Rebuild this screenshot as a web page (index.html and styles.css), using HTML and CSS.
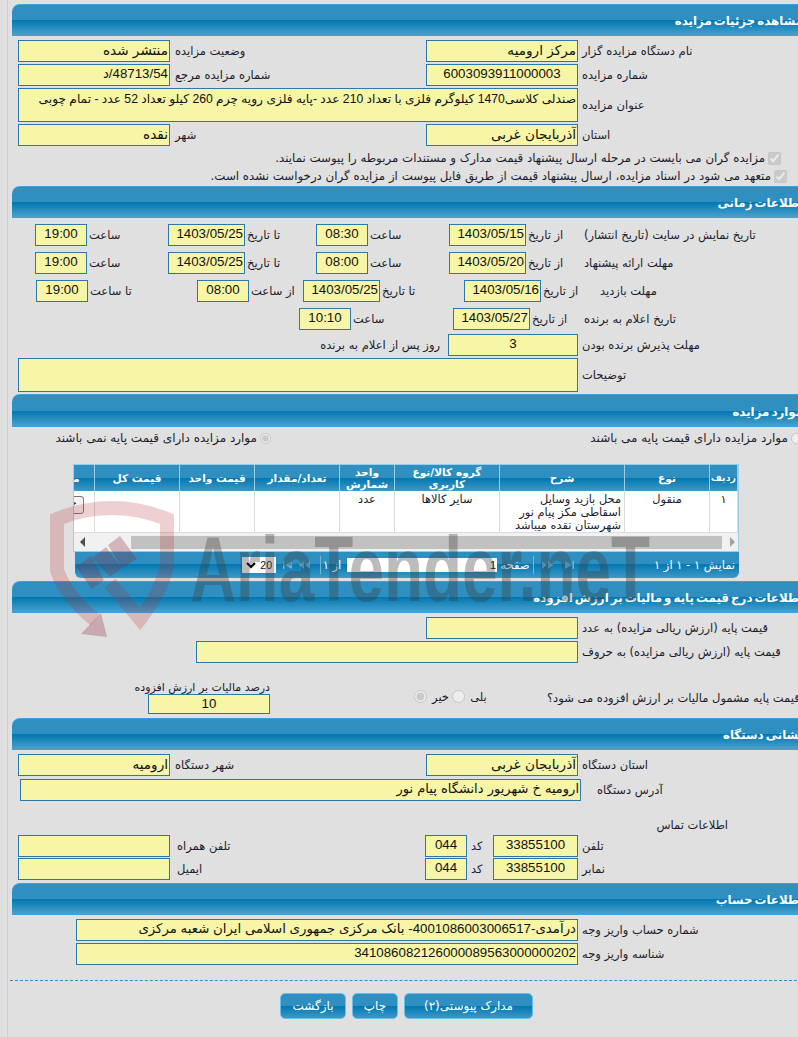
FILE: index.html
```html
<!DOCTYPE html>
<html lang="fa">
<head>
<meta charset="utf-8">
<title>مشاهده جزئیات مزایده</title>
<link rel="stylesheet" href="styles.css">
</head>
<body>
<div class="page">

<section>
  <h2 class="bar"><span dir="rtl">مشاهده جزئیات مزایده</span></h2>
  <div class="row two mt4">
    <div class="field fa">منتشر شده</div><div class="lb">وضعیت مزایده</div>
    <div class="field fa">مرکز ارومیه</div><div class="lb">نام دستگاه مزایده گزار</div>
  </div>
  <div class="row two mt4">
    <div class="field">48713/54/د</div><div class="lb">شماره مزایده مرجع</div>
    <div class="field center">6003093911000003</div><div class="lb">شماره مزایده</div>
  </div>
  <div class="row title mt4">
    <div class="field area">صندلی کلاسی1470 کیلوگرم فلزی با تعداد 210 عدد -پایه فلزی رویه چرم 260 کیلو تعداد 52 عدد - تمام چوبی</div><div class="lb">عنوان مزایده</div>
  </div>
  <div class="row two mt6">
    <div class="field fa">نقده</div><div class="lb">شهر</div>
    <div class="field fa">آذربایجان غربی</div><div class="lb">استان</div>
  </div>
  <div class="check one"><input type="checkbox" checked disabled><span>مزایده گران می بایست در مرحله ارسال پیشنهاد قیمت مدارک و مستندات مربوطه را پیوست نمایند.</span></div>
  <div class="check two-c"><input type="checkbox" checked disabled><span>متعهد می شود در اسناد مزایده، ارسال پیشنهاد قیمت از طریق فایل پیوست از مزایده گران درخواست نشده است.</span></div>
</section>

<section>
  <h2 class="bar"><span dir="rtl">اطلاعات زمانی</span></h2>
  <div class="row t1 mt6">
    <div class="field center">19:00</div><div class="lb">ساعت</div>
    <div class="field">1403/05/25</div><div class="lb">تا تاریخ</div>
    <div class="field center">08:30</div><div class="lb">ساعت</div>
    <div class="field">1403/05/15</div><div class="lb">از تاریخ</div>
    <div class="lb">تاریخ نمایش در سایت (تاریخ انتشار)</div>
  </div>
  <div class="row t1 mt8">
    <div class="field center">19:00</div><div class="lb">ساعت</div>
    <div class="field">1403/05/25</div><div class="lb">تا تاریخ</div>
    <div class="field center">08:00</div><div class="lb">ساعت</div>
    <div class="field">1403/05/20</div><div class="lb">از تاریخ</div>
    <div class="lb">مهلت ارائه پیشنهاد</div>
  </div>
  <div class="row t3 mt8">
    <div class="field center">19:00</div><div class="lb">تا ساعت</div>
    <div class="field center">08:00</div><div class="lb">از ساعت</div>
    <div class="field">1403/05/25</div><div class="lb">تا تاریخ</div>
    <div class="field">1403/05/16</div><div class="lb">از تاریخ</div>
    <div class="lb">مهلت بازدید</div>
  </div>
  <div class="row t4 mt8">
    <div class="field center">10:10</div><div class="lb">ساعت</div>
    <div class="field">1403/05/27</div><div class="lb">از تاریخ</div>
    <div class="lb">تاریخ اعلام به برنده</div>
  </div>
  <div class="row t5 mt6">
    <div class="lb end">روز پس از اعلام به برنده</div>
    <div class="field center">3</div>
    <div class="lb">مهلت پذیرش برنده بودن</div>
  </div>
  <div class="row title mt4">
    <div class="field area"></div><div class="lb">توضیحات</div>
  </div>
</section>

<section>
  <h2 class="bar tall"><span dir="rtl">موارد مزایده</span></h2>
  <div class="radios">
    <div class="radio-item"><input type="radio" name="base" checked disabled><span>موارد مزایده دارای قیمت پایه نمی باشند</span></div>
    <div class="radio-item"><input type="radio" name="base" disabled><span>موارد مزایده دارای قیمت پایه می باشند</span></div>
  </div>
  <div class="grid-box">
    <div class="grid-clip">
      <table>
        <colgroup>
          <col class="c1"><col class="c2"><col class="c3"><col class="c4"><col class="c5"><col class="c6"><col class="c7"><col class="c8"><col class="c9">
        </colgroup>
        <thead>
          <tr><th>ردیف</th><th>نوع</th><th>شرح</th><th>گروه کالا/نوع کاربری</th><th>واحد شمارش</th><th>تعداد/مقدار</th><th>قیمت واحد</th><th>قیمت کل</th><th>مدارک</th></tr>
        </thead>
        <tbody>
          <tr><td>۱</td><td>منقول</td><td class="desc">محل بازید وسایل اسقاطی مکز پیام نور شهرستان نقده میباشد</td><td>سایر کالاها</td><td>عدد</td><td></td><td></td><td></td><td><span class="doc-btn">جزئیات</span></td></tr>
        </tbody>
      </table>
    </div>
    <div class="hscroll">
      <svg class="arrow" viewBox="0 0 6 10" width="6" height="10"><path d="M5 0v10L0 5z"/></svg>
      <div class="thumb"></div>
      <svg class="arrow off" viewBox="0 0 6 10" width="6" height="10"><path d="M1 0v10l5-5z"/></svg>
    </div>
  </div>
  <div class="pager">
    <div class="select"><svg viewBox="0 0 10 7" width="10" height="7"><path d="M1 1l4 4 4-4" fill="none" stroke="#000" stroke-width="2"/></svg><span>20</span></div>
    <svg class="nav first" viewBox="0 0 32 8" width="32" height="8"><path d="M0 0h1.500v8H0zM9 0v8L2 4zM21 0v8l-5-4zM27 0v8l-5-4z"/></svg>
    <i class="sep"></i>
    <span class="of" dir="rtl">از ۱</span>
    <div class="page-input">1</div>
    <span class="pg" dir="rtl">صفحه</span>
    <i class="sep"></i>
    <svg class="nav last" viewBox="0 0 32 8" width="32" height="8"><path d="M0 0v8l5-4zM6 0v8l5-4zM23 0v8l7-4zM30.500 0H32v8h-1.500z"/></svg>
    <span class="info" dir="rtl">نمایش ۱ - ۱ از ۱</span>
  </div>
</section>

<section>
  <h2 class="bar"><span dir="rtl">اطلاعات درج قیمت پایه و مالیات بر ارزش افزوده</span></h2>
  <div class="row base1 mt4">
    <div class="field"></div><div class="lb">قیمت پایه (ارزش ریالی مزایده) به عدد</div>
  </div>
  <div class="row base2 mt4">
    <div class="field"></div><div class="lb">قیمت پایه (ارزش ریالی مزایده) به حروف</div>
  </div>
  <div class="row tax">
    <div class="tax-stack"><div class="tax-label">درصد مالیات بر ارزش افزوده</div><div class="field center">10</div></div>
    <div class="tax-radios">
      <input type="radio" name="tax" checked disabled><span>خیر</span>
      <input type="radio" name="tax" disabled><span>بلی</span>
    </div>
    <div class="lb tax-q">قیمت پایه مشمول مالیات بر ارزش افزوده می شود؟</div>
  </div>
</section>

<section>
  <h2 class="bar"><span dir="rtl">نشانی دستگاه</span></h2>
  <div class="row two mt4">
    <div class="field fa">ارومیه</div><div class="lb">شهر دستگاه</div>
    <div class="field fa">آذربایجان غربی</div><div class="lb">استان دستگاه</div>
  </div>
  <div class="row addr">
    <div class="field fa">ارومیه خ شهریور دانشگاه پیام نور</div><div class="lb">آدرس دستگاه</div>
  </div>
  <div class="contact">اطلاعات تماس</div>
  <div class="row ph">
    <div class="field"></div><div class="lb">تلفن همراه</div>
    <div class="field center">044</div><div class="lb">کد</div>
    <div class="field center">33855100</div><div class="lb">تلفن</div>
  </div>
  <div class="row ph mt4">
    <div class="field"></div><div class="lb">ایمیل</div>
    <div class="field center">044</div><div class="lb">کد</div>
    <div class="field center">33855100</div><div class="lb">نمابر</div>
  </div>
</section>

<section>
  <h2 class="bar"><span dir="rtl">اطلاعات حساب</span></h2>
  <div class="row acct mt4">
    <div class="field">درآمدی-4001086003006517- بانک مرکزی جمهوری اسلامی ایران شعبه مرکزی</div><div class="lb">شماره حساب واریز وجه</div>
  </div>
  <div class="row acct mt4">
    <div class="field">341086082126000089563000000202</div><div class="lb">شناسه واریز وجه</div>
  </div>
</section>

<div class="dash"></div>
<div class="actions">
  <button type="button">بازگشت</button>
  <button type="button">چاپ</button>
  <button type="button" class="wide">مدارک پیوستی(۲)</button>
</div>

<svg class="watermark" viewBox="0 0 620 150" width="620" height="150" aria-hidden="true">
  <path class="wm-band" d="M55 125 Q25 100 17 75 L17 24 Q72 2 127 24 L127 70 Q122 95 100 124 L70 88"/>
  <g class="wm-fill">
    <path d="M61 118 L67 142 L41 139Z"/>
    <path d="M36 72 L51 61 L64 85 L52 94Z"/>
    <path d="M52 63 L66 52 L82 73 L70 82Z"/>
    <path d="M68 50 L80 41 L97 64 L82 73Z"/>
  </g>
  <text class="wm-text" x="150" y="106" textLength="460" lengthAdjust="spacingAndGlyphs">AriaTender.neT</text>
</svg>

</div>
</body>
</html>
```
FILE: styles.css
```css
* { box-sizing: border-box; }
html, body { margin: 0; padding: 0; }
html { overflow: hidden; background: #e0e0e0; }
body {
  width: 798px;
  height: 1037px;
  overflow: hidden;
  font: 11.8px/14px "DejaVu Sans", sans-serif;
  color: #1c1c2c;
}
.page {
  position: relative;
  width: 805px;
  height: 1037px;
  margin-left: 7px;
  padding: 4px 0 0 4px;
  border-left: 1px solid #cfcfcf;
}
section:nth-of-type(1) { height: 182px; }
section:nth-of-type(2) { height: 208px; }
section:nth-of-type(3) { height: 187px; }
section:nth-of-type(4) { height: 137px; }
section:nth-of-type(5) { height: 165px; }

.bar {
  display: flex;
  justify-content: flex-end;
  align-items: center;
  height: 32px;
  margin: 0;
  padding: 2px 9px 0 0;
  border-top: 1px solid #3e9fdc;
  border-bottom: 1px solid #3e9fdc;
  border-top-left-radius: 8px;
  background: linear-gradient(#2e8fc0 0, #2e8fc0 50%, #0077b0 50%, #4aa0cc 100%);
  color: #fff;
  font: bold 11.8px/16px "DejaVu Sans", sans-serif;
  word-spacing: -2px;
}
.bar.tall { height: 33px; }

.row { display: grid; height: 20px; align-items: stretch; }
.mt4 { margin-top: 4px; }
.mt6 { margin-top: 6px; }
.mt8 { margin-top: 8px; }

.field {
  direction: rtl;
  padding: 0 1px;
  overflow: hidden;
  white-space: nowrap;
  background: #f7f5a6;
  border: 1px solid #2a78ad;
  color: #111;
  font: 13.3px/18px "Liberation Sans", "DejaVu Sans", sans-serif;
}
.field.fa { font: 13.6px/18px "DejaVu Sans", sans-serif; }
.field.center { text-align: center; }
.lb {
  direction: rtl;
  text-align: left;
  white-space: nowrap;
  font-size: 11.5px;
  line-height: 22px;
}
.lb.end { text-align: right; padding-right: 8px; }

.two { grid-template-columns: 152px 256px 152px 1fr; padding-left: 6px; }
.two .lb { padding-left: 5px; }
.two .lb:last-child { padding-left: 4px; }

.title { grid-template-columns: 560px 1fr; padding-left: 6px; height: 30px; }
.title .lb { padding-left: 4px; line-height: 34px; }
.field.area { padding-top: 1px; font-size: 12.2px; }
.mt6 + .check { margin-top: 5px; }

.check {
  display: flex;
  direction: rtl;
  align-items: center;
  height: 18px;
  gap: 3px;
  white-space: nowrap;
}
.check input { width: 13px; height: 13px; margin: 0; }
.check.one { padding-right: 31px; }
.check.two-c { padding-right: 25px; }

.t1 { grid-template-columns: 52px 81px 77px 71px 52px 81px 77px 56px 1fr; padding-left: 23px; }
.t3 { grid-template-columns: 52px 109px 52px 54px 77px 84px 77px 59px 1fr; padding-left: 24px; }
.t4 { grid-template-columns: 52px 102px 77px 52px 1fr; padding-left: 287px; }
.t5 { grid-template-columns: 430px 130px 1fr; padding-left: 6px; }
.t1 .lb, .t3 .lb, .t4 .lb { padding-left: 2px; }
.t5 > .lb:last-child { padding-left: 4px; }
.t3 > .lb:last-child { padding-left: 0; }

.radios {
  display: grid;
  grid-template-columns: 259px 1fr;
  height: 20px;
  margin-top: 1px;
  font-size: 12px;
}
.radio-item {
  display: flex;
  direction: rtl;
  align-items: center;
  gap: 3px;
  white-space: nowrap;
}
.radio-item input { width: 11px; height: 11px; margin: 0; }
.radio-item:last-child { padding-right: 10px; }

.grid-box {
  width: 666px;
  margin: 16px 0 0 61px;
  border: 1px solid #9ccde6;
  background: #fff;
}
.grid-clip { direction: rtl; overflow: hidden; }
table { border-collapse: collapse; table-layout: fixed; width: 706px; }
.c1 { width: 28px; } .c2 { width: 85px; } .c3 { width: 125px; } .c4 { width: 105px; }
.c5 { width: 55px; } .c6 { width: 85px; } .c7 { width: 75px; } .c8 { width: 85px; } .c9 { width: 63px; }
th {
  height: 26px;
  padding: 0 1px;
  border-right: 1px solid #9ccde6;
  border-left: 1px solid #9ccde6;
  background: linear-gradient(#2e8fc0 0, #2e8fc0 50%, #0077b0 50%, #3f98c8 100%);
  color: #fff;
  font: bold 10.6px/12px "DejaVu Sans", sans-serif;
}
th:first-child { font-size: 9.5px; }
td {
  height: 40px;
  padding: 2px 2px 0;
  border: 1px solid #dcdcdc;
  border-top: 0;
  text-align: center;
  vertical-align: top;
  font-size: 11.4px;
  line-height: 13px;
}
td.desc { text-align: right; padding-right: 3px; }
.doc-btn {
  display: block;
  width: 42px;
  height: 18px;
  margin: 3px auto 0;
  border: 1px solid #777;
  border-radius: 3px;
  background: #f4f4f4;
  overflow: hidden;
  font-size: 9px;
}
.hscroll {
  display: flex;
  align-items: center;
  height: 18px;
  background: #f1f1f1;
  padding: 0 4px 0 6px;
}
.thumb { width: 591px; height: 13px; margin: 0 7px 0 45px; background: #c1c1c1; flex: none; }
.arrow { fill: #505050; flex: none; }
.arrow.off { fill: #a3a3a3; }

.pager {
  display: flex;
  align-items: center;
  width: 664px;
  height: 26px;
  margin: 0 0 0 63px;
  padding: 0 4px 0 167px;
  border-bottom-left-radius: 6px;
  border-bottom-right-radius: 6px;
  background: linear-gradient(#2e8fc0 0, #2e8fc0 45%, #0077b0 45%, #3f98c8 100%);
  color: #fff;
  font-size: 11.5px;
  white-space: nowrap;
}
.select {
  display: flex;
  align-items: center;
  justify-content: space-between;
  width: 34px;
  height: 16px;
  padding: 0 4px;
  background: #fff;
  color: #111;
  font: 10.5px/16px "Liberation Sans", sans-serif;
}
.nav { fill: #6fb2d4; flex: none; }
.nav.first { margin: 0 5px 0 7px; }
.sep { width: 1px; height: 18px; background: #79b3d3; }
.of { width: 22px; text-align: center; }
.page-input {
  width: 150px;
  height: 14px;
  margin-left: 4px;
  padding-right: 1px;
  background: #fff;
  color: #111;
  text-align: right;
  font: 11px/14px "Liberation Sans", sans-serif;
}
.pg { width: 36px; text-align: center; }
.nav.last { margin: 0 0 0 8px; }
.info { margin-left: auto; }

.base1 { grid-template-columns: 152px 1fr; padding-left: 414px; }
.base2 { grid-template-columns: 382px 1fr; padding-left: 184px; }
.base1 .lb, .base2 .lb { padding-left: 4px; }
.tax {
  grid-template-columns: 122px 277px 1fr;
  height: 32px;
  margin-top: 21px;
  padding-left: 136px;
}
.tax-stack { display: flex; flex-direction: column; justify-content: flex-end; }
.tax-stack .field { flex: 0 0 20px; }
.tax-label { direction: rtl; white-space: nowrap; font-size: 11px; line-height: 12px; }
.tax-radios {
  display: flex;
  align-items: flex-start;
  padding: 8px 0 0 144px;
  line-height: 14px;
  font-size: 11.5px;
}
.tax-radios input { width: 13px; height: 13px; margin: 0 5px 0 0; flex: none; }
.tax-radios span { width: 17px; margin-right: 3px; direction: rtl; text-align: center; flex: none; }
.lb.tax-q { line-height: 32px; height: 32px; }

.addr { grid-template-columns: 561px 1fr; padding-left: 8px; margin-top: 5px; }
.addr .lb { padding-left: 16px; }
.addr .field.fa { font-size: 13px; }
.contact { direction: rtl; margin: 19px 70px 0 0; height: 14px; line-height: 14px; padding-right: 14px; font-size: 11.5px; }
.ph { grid-template-columns: 152px 255px 42px 26px 85px 1fr; padding-left: 6px; margin-top: 3px; }
.ph .lb { padding-left: 4px; }
.ph .field:first-child + .lb { padding-left: 7px; }
.acct { grid-template-columns: 502px 1fr; padding-left: 64px; }
.acct .lb { padding-left: 4px; }

.dash { margin: 17px 0 0 -2px; border-top: 1px dashed #2e8fc0; }
.actions { display: flex; gap: 6px; margin: 12px 0 0 268px; }
button {
  width: 66px;
  height: 26px;
  padding: 0;
  border: 1px solid #62c1ec;
  border-radius: 5px;
  background: linear-gradient(#2e8fc0 0, #2e8fc0 50%, #0077b0 50%, #3f98c8 100%);
  color: #fff;
  font: 12px/14px "DejaVu Sans", sans-serif;
  direction: rtl;
}
button:nth-child(2) { width: 46px; }
button.wide { width: 129px; }

.watermark {
  position: absolute;
  left: 32px;
  top: 495px;
  pointer-events: none;
}
.wm-band {
  fill: none;
  stroke: #b52a2a;
  stroke-opacity: .22;
  stroke-width: 14;
}
.wm-fill { fill: #8f2a3a; fill-opacity: .3; }
.wm-text {
  font: bold 92px "Liberation Sans", sans-serif;
  fill: #3c3c3c;
  fill-opacity: .34;
}
```
